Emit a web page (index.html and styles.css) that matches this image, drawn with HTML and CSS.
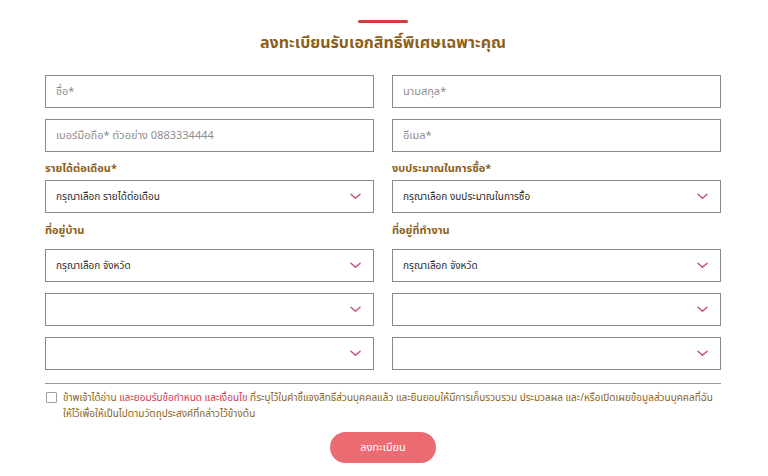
FILE: index.html
```html
<!DOCTYPE html>
<html lang="th">
<head>
<meta charset="utf-8">
<link rel="stylesheet" href="styles.css">
</head>
<body>
<div class="page">
  <div class="accent"></div>
  <h1 class="title">ลงทะเบียนรับเอกสิทธิ์พิเศษเฉพาะคุณ</h1>
  <form class="form">
    <div class="grid">
      <div class="field"><div class="input placeholder">ชื่อ*</div></div>
      <div class="field"><div class="input placeholder">นามสกุล*</div></div>
      <div class="field"><div class="input placeholder">เบอร์มือถือ* ตัวอย่าง 0883334444</div></div>
      <div class="field"><div class="input placeholder">อีเมล*</div></div>
    </div>
    <div class="grid labels-1">
      <div class="label">รายได้ต่อเดือน*</div>
      <div class="label">งบประมาณในการซื้อ*</div>
    </div>
    <div class="grid">
      <div class="select"><span>กรุณาเลือก รายได้ต่อเดือน</span><svg class="chev" viewBox="0 0 12 7"><path d="M1 1l5 4.5L11 1"/></svg></div>
      <div class="select"><span>กรุณาเลือก งบประมาณในการซื้อ</span><svg class="chev" viewBox="0 0 12 7"><path d="M1 1l5 4.5L11 1"/></svg></div>
    </div>
    <div class="grid labels-2">
      <div class="label">ที่อยู่บ้าน</div>
      <div class="label">ที่อยู่ที่ทำงาน</div>
    </div>
    <div class="grid">
      <div class="select"><span>กรุณาเลือก จังหวัด</span><svg class="chev" viewBox="0 0 12 7"><path d="M1 1l5 4.5L11 1"/></svg></div>
      <div class="select"><span>กรุณาเลือก จังหวัด</span><svg class="chev" viewBox="0 0 12 7"><path d="M1 1l5 4.5L11 1"/></svg></div>
      <div class="select"><span></span><svg class="chev" viewBox="0 0 12 7"><path d="M1 1l5 4.5L11 1"/></svg></div>
      <div class="select"><span></span><svg class="chev" viewBox="0 0 12 7"><path d="M1 1l5 4.5L11 1"/></svg></div>
      <div class="select"><span></span><svg class="chev" viewBox="0 0 12 7"><path d="M1 1l5 4.5L11 1"/></svg></div>
      <div class="select"><span></span><svg class="chev" viewBox="0 0 12 7"><path d="M1 1l5 4.5L11 1"/></svg></div>
    </div>
    <hr class="divider">
    <div class="consent">
      <span class="box"></span>
      <p class="consent-text">ข้าพเจ้าได้อ่าน <span class="link">และยอมรับข้อกำหนด และเงื่อนไข</span> ที่ระบุไว้ในคำชี้แจงสิทธิ์ส่วนบุคคลแล้ว และยินยอมให้มีการเก็บรวบรวม ประมวลผล และ/หรือเปิดเผยข้อมูลส่วนบุคคลที่ฉันให้ไว้เพื่อให้เป็นไปตามวัตถุประสงค์ที่กล่าวไว้ข้างต้น</p>
    </div>
    <div class="actions"><button type="button" class="submit">ลงทะเบียน</button></div>
  </form>
</div>
</body>
</html>
```

FILE: styles.css
```css
* { box-sizing: border-box; }
html, body { margin: 0; padding: 0; background: #fff; }
body {
  font-family: "Noto Sans Thai", "Noto Sans", "DejaVu Sans", sans-serif;
  color: #333;
}
.page {
  width: 676px;
  margin-left: 45px;
  padding-top: 20px;
}
.accent {
  width: 50px;
  height: 3px;
  border-radius: 2px;
  background: #d9383f;
  margin: 0 auto;
}
.title {
  margin: 7px 0 0;
  text-align: center;
  font-size: 16px;
  line-height: 26px;
  font-weight: 700;
  color: #8d5f19;
}
.form { margin-top: 19px; }
.grid {
  display: grid;
  grid-template-columns: 329px 329px;
  column-gap: 18px;
  row-gap: 11px;
}
.input, .select {
  height: 33px;
  border: 1px solid #8a8a8a;
  background: #fff;
}
.input {
  display: flex;
  align-items: center;
  padding-left: 10px;
  font-size: 11px;
}
.placeholder { color: #8e8e8e; }
.select {
  display: flex;
  align-items: center;
  justify-content: space-between;
  padding: 0 12px 0 10px;
  font-size: 10px;
  color: #2a2a2a;
}
.chev {
  width: 11px;
  height: 7px;
  fill: none;
  stroke: #c84a66;
  stroke-width: 1.4;
  stroke-linecap: round;
  stroke-linejoin: round;
}
.label {
  font-size: 11px;
  line-height: 18px;
  font-weight: 700;
  color: #8d5f19;
}
.labels-1 { margin-top: 8px; margin-bottom: 2px; }
.labels-2 { margin-top: 9px; margin-bottom: 9px; }
.divider {
  margin: 13px 0 0;
  border: 0;
  border-top: 1px solid #9a9a9a;
}
.consent {
  display: flex;
  align-items: flex-start;
  gap: 6px;
  margin-top: 6px;
}
.box {
  flex: none;
  width: 11px;
  height: 11px;
  margin-top: 2px;
  margin-left: 1px;
  border: 1px solid #a0a0a0;
  border-radius: 1px;
}
.consent-text {
  margin: 0;
  font-size: 10px;
  line-height: 16px;
  color: #8d6420;
}
.link { color: #d23d52; }
.actions {
  display: flex;
  justify-content: center;
  margin-top: 10px;
}
.submit {
  width: 106px;
  height: 31px;
  border: 0;
  border-radius: 16px;
  background: #ec6b73;
  color: #fff;
  font-family: inherit;
  font-size: 11px;
}
```
